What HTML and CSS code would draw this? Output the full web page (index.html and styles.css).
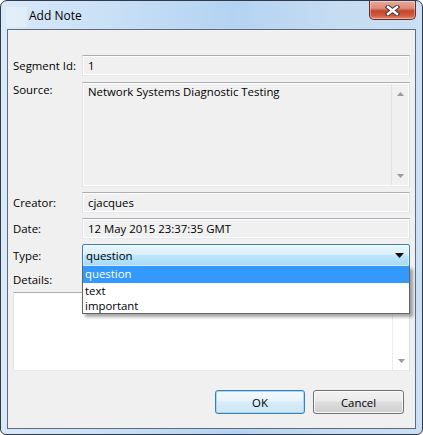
FILE: index.html
```html
<!DOCTYPE html>
<html>
<head>
<meta charset="utf-8">
<link rel="stylesheet" href="styles.css">
</head>
<body>
<div class="window">
  <div class="titlebar">
    <div class="icon-slot"></div>
    <span class="title">Add Note</span>
    <div class="close">
      <svg width="15" height="11" viewBox="0 0 15 11">
        <path d="M3 2 L12 9 M12 2 L3 9" stroke="#3a3a3a" stroke-width="4.4" stroke-linecap="square"/>
        <path d="M3 2 L12 9 M12 2 L3 9" stroke="#ffffff" stroke-width="2.4" stroke-linecap="square"/>
      </svg>
    </div>
  </div>
  <div class="client">
    <div class="row">
      <span class="lbl">Segment Id:</span>
      <div class="field">1</div>
    </div>
    <div class="row row-top gap6">
      <span class="lbl lbl-top">Source:</span>
      <div class="field area">
        <div class="area-text">Network Systems Diagnostic Testing</div>
        <div class="vscroll">
          <svg class="arr" width="7" height="4" viewBox="0 0 7 4"><path d="M0 4 L3.5 0 L7 4 Z" fill="#9a9a9a"/></svg>
          <svg class="arr" width="7" height="4" viewBox="0 0 7 4"><path d="M0 0 L7 0 L3.5 4 Z" fill="#9a9a9a"/></svg>
        </div>
      </div>
    </div>
    <div class="row gap5">
      <span class="lbl">Creator:</span>
      <div class="field">cjacques</div>
    </div>
    <div class="row gap5">
      <span class="lbl">Date:</span>
      <div class="field">12 May 2015 23:37:35 GMT</div>
    </div>
    <div class="row gap5">
      <span class="lbl">Type:</span>
      <div class="combo-wrap">
        <div class="combo">
          <span>question</span>
          <svg width="9" height="5" viewBox="0 0 9 5"><path d="M0 0 L9 0 L4.5 5 Z" fill="#111"/></svg>
        </div>
        <ul class="dropdown">
          <li class="sel">question</li>
          <li>text</li>
          <li>important</li>
        </ul>
      </div>
    </div>
    <div class="lbl details-lbl">Details:</div>
    <div class="details">
      <div class="vscroll vscroll-white">
        <svg class="arr" width="7" height="4" viewBox="0 0 7 4"><path d="M0 4 L3.5 0 L7 4 Z" fill="#9a9a9a"/></svg>
        <svg class="arr" width="7" height="4" viewBox="0 0 7 4"><path d="M0 0 L7 0 L3.5 4 Z" fill="#9a9a9a"/></svg>
      </div>
    </div>
    <div class="buttons">
      <button class="btn btn-default">OK</button>
      <button class="btn btn-cancel">Cancel</button>
    </div>
  </div>
</div>
</body>
</html>
```

FILE: styles.css
```css
* { box-sizing: border-box; }
html, body { margin: 0; padding: 0; background: #ffffff; }
body {
  font-family: "Segoe UI", "Open Sans", "Liberation Sans", sans-serif;
  font-size: 11.4px;
  color: #000;
}
.window {
  width: 423px;
  height: 435px;
  border: 1px solid #2e3b4c;
  border-radius: 7px 7px 6px 6px;
  background: linear-gradient(to right, #d9e9f8 0%, #c6def5 30%, #b4d3f2 55%, #c6dcf1 80%, #cadff3 100%);
  display: flex;
  flex-direction: column;
  overflow: hidden;
}
.titlebar {
  position: relative;
  height: 28px;
  flex: none;
  display: flex;
  align-items: center;
}
.icon-slot {
  width: 21px;
  height: 20px;
  margin-left: 5px;
  margin-top: 4px;
  background: rgba(255,255,255,0.25);
}
.title {
  margin-left: 2px;
  margin-top: 1px;
  font-size: 12px;
}
.close {
  position: absolute;
  right: 6px;
  top: 0;
  width: 47px;
  height: 19px;
  border: 1px solid #6b2a22;
  border-top: none;
  border-radius: 0 0 5px 5px;
  background: linear-gradient(#e9a99b 0%, #dd8b78 40%, #c5442c 55%, #cf5a3e 80%, #e38b6e 100%);
  box-shadow: inset 0 0 0 1px rgba(255,255,255,0.35);
  display: flex;
  align-items: center;
  justify-content: center;
}
.client {
  flex: none;
  margin: 0 6px;
  height: 400px;
  border: 1px solid #5d6b7c;
  background: #f0f0f0;
  padding: 25px 5px 0 5px;
  display: flex;
  flex-direction: column;
}
.row {
  display: grid;
  grid-template-columns: 69px 328px;
  align-items: center;
}
.row-top { align-items: start; }
.gap6 { margin-top: 6px; }
.gap5 { margin-top: 5px; }
.lbl { line-height: 16px; white-space: nowrap; }
.lbl-top { margin-top: 0; }
.field {
  height: 21px;
  border: 1px solid #b7b7b7;
  border-color: #abadb3 #dbdfe6 #e3e9ef #e2e3ea;
  box-shadow: inset 0 0 0 1px #ffffff;
  background: #f0f0f0;
  padding: 0 5px;
  line-height: 19px;
  white-space: nowrap;
}
.area {
  height: 105px;
  padding: 0;
  display: flex;
  line-height: 16px;
}
.area-text {
  flex: 1;
  padding: 1px 5px;
}
.vscroll {
  width: 17px;
  margin: 1px 1px 1px 0;
  border-left: 1px solid #e2e2e2;
  display: flex;
  flex-direction: column;
  justify-content: space-between;
  align-items: center;
  padding: 8px 0 7px 0;
}
.vscroll-white { border-left-color: #ececec; }
.arr { display: block; }
.combo-wrap { position: relative; }
.combo {
  height: 23px;
  border: 1px solid #3c7fb1;
  border-radius: 2px;
  background: linear-gradient(#eaf6fd 0%, #d9f0fc 45%, #bee6fd 50%, #a7d9f5 100%);
  box-shadow: inset 0 0 0 1px rgba(255,255,255,0.5);
  display: flex;
  align-items: center;
  justify-content: space-between;
  padding: 0 5px 0 3px;
}
.combo span { line-height: 20px; }
.dropdown {
  position: absolute;
  top: 22px;
  left: 0;
  width: 328px;
  margin: 0;
  padding: 0;
  list-style: none;
  background: #ffffff;
  border: 1px solid #646464;
  border-top: none;
  box-shadow: 3px 3px 3px rgba(0,0,0,0.35);
  z-index: 5;
}
.dropdown li {
  height: 15px;
  line-height: 15px;
  padding-left: 2px;
}
.dropdown li.sel {
  height: 17px;
  line-height: 16px;
  background: #3399ff;
  color: #ffffff;
}
.details-lbl { margin-top: 5px; }
.details {
  margin-top: 4px;
  height: 79px;
  border: 1px solid #abadb3;
  border-color: #abadb3 #dbdfe6 #e3e9ef #e2e3ea;
  background: #ffffff;
  display: flex;
  justify-content: flex-end;
}
.details .vscroll { margin: 0; }
.buttons {
  margin-top: 19px;
  display: flex;
  justify-content: flex-end;
  gap: 8px;
  padding-right: 6px;
}
.btn {
  font: inherit;
  height: 24px;
  border-radius: 3px;
  padding: 0;
  color: #000;
}
.btn-default {
  width: 90px;
  border: 1px solid #3c7fb1;
  background: linear-gradient(#f2f9fd 0%, #e8f4fb 45%, #d8ecf8 50%, #cde6f6 100%);
  box-shadow: inset 0 0 0 1px #a3d7f3;
}
.btn-cancel {
  width: 91px;
  border: 1px solid #707070;
  background: linear-gradient(#f2f2f2 0%, #ebebeb 45%, #dddddd 50%, #cfcfcf 100%);
  box-shadow: inset 0 0 0 1px rgba(255,255,255,0.8);
}
```
